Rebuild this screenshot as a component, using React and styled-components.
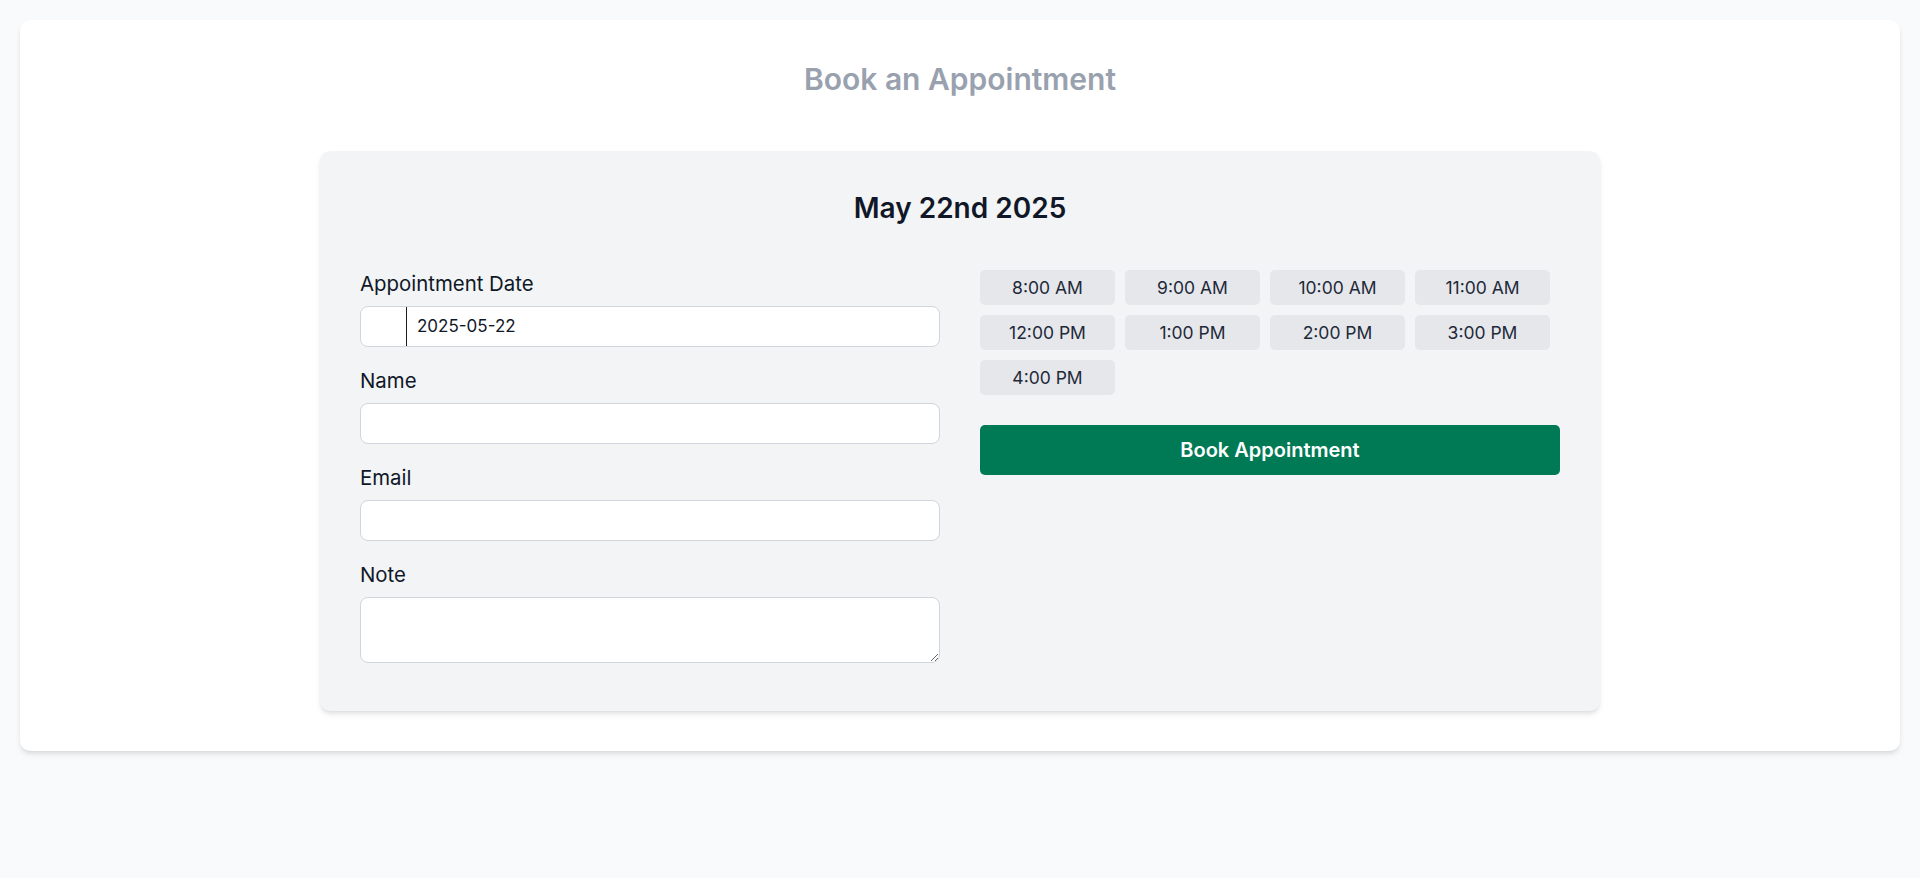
import React from "react";
import styled, { createGlobalStyle } from "styled-components";

const Global = createGlobalStyle`
  * { box-sizing: border-box; }
  html, body { margin: 0; padding: 0; }
  body {
    background: #f9fafb;
    font-family: Inter, "Noto Sans", sans-serif;
    color: #101828;
  }
`;

const Page = styled.div`
  padding: 20px;
  min-height: 878px;
`;

const Card = styled.section`
  background: #ffffff;
  border-radius: 10px;
  box-shadow: 0 4px 6px -1px rgba(0, 0, 0, 0.1), 0 2px 4px -2px rgba(0, 0, 0, 0.1);
  padding: 43px 40px 40px;
`;

const Title = styled.h1`
  margin: 0 0 56px;
  text-align: center;
  font-size: 30px;
  line-height: 32px;
  font-weight: 600;
  color: #99a1af;
`;

const Panel = styled.div`
  width: 1280px;
  margin: 0 auto;
  background: #f3f4f6;
  border-radius: 10px;
  box-shadow: 0 4px 6px -1px rgba(0, 0, 0, 0.1), 0 2px 4px -2px rgba(0, 0, 0, 0.1);
  padding: 43px 40px 48px;
`;

const DateHeading = styled.h2`
  margin: 0 0 48px;
  text-align: center;
  font-size: 28px;
  line-height: 28px;
  font-weight: 600;
  color: #101828;
`;

const Columns = styled.div`
  display: grid;
  grid-template-columns: 1fr 1fr;
  column-gap: 40px;
  align-items: start;
`;

const FormColumn = styled.div`
  display: flex;
  flex-direction: column;
  gap: 20.5px;
`;

const Field = styled.div`
  display: flex;
  flex-direction: column;
`;

const Label = styled.label`
  font-size: 20.4px;
  line-height: 28px;
  margin-bottom: 8px;
  color: #101828;
`;

const DateBox = styled.div`
  display: flex;
  align-items: stretch;
  height: 40.5px;
  background: #ffffff;
  border: 1px solid #d1d5dc;
  border-radius: 8px;
  overflow: hidden;
`;

const IconSlot = styled.span`
  width: 46px;
  flex: none;
  border-right: 1px solid #1e1e1e;
`;

const DateInput = styled.input`
  flex: 1;
  border: none;
  outline: none;
  background: transparent;
  padding: 0 10px;
  font-family: inherit;
  font-size: 17px;
  color: #101828;
`;

const TextInput = styled.input`
  height: 40.5px;
  background: #ffffff;
  border: 1px solid #d1d5dc;
  border-radius: 8px;
  padding: 0 10px;
  font-family: inherit;
  font-size: 17px;
  outline: none;
`;

const NoteArea = styled.textarea`
  display: block;
  height: 66px;
  background: #ffffff;
  border: 1px solid #d1d5dc;
  border-radius: 8px;
  padding: 8px 10px;
  font-family: inherit;
  font-size: 17px;
  outline: none;
`;

const SlotColumn = styled.div`
  display: flex;
  flex-direction: column;
  gap: 30px;
`;

const SlotGrid = styled.div`
  display: flex;
  flex-wrap: wrap;
  gap: 10px;
`;

const SlotButton = styled.button`
  width: 135px;
  height: 35px;
  border: none;
  border-radius: 5px;
  background: ${(p) => (p.$active ? "#d1d5dc" : "#e5e7eb")};
  color: #1e2939;
  font-family: inherit;
  font-size: 17.5px;
  cursor: pointer;
  padding: 0;
`;

const BookButton = styled.button`
  width: 100%;
  height: 49.5px;
  border: none;
  border-radius: 5px;
  background: #007a55;
  color: #ffffff;
  font-family: inherit;
  font-size: 20px;
  font-weight: 600;
  cursor: pointer;
`;

const slots = [
  "8:00 AM",
  "9:00 AM",
  "10:00 AM",
  "11:00 AM",
  "12:00 PM",
  "1:00 PM",
  "2:00 PM",
  "3:00 PM",
  "4:00 PM",
];

export default function App() {
  return (
    <>
      <Global />
      <Page>
        <Card>
          <Title>Book an Appointment</Title>
          <Panel>
            <DateHeading>May 22nd 2025</DateHeading>
            <Columns>
              <FormColumn>
                <Field>
                  <Label>Appointment Date</Label>
                  <DateBox>
                    <IconSlot />
                    <DateInput readOnly defaultValue="2025-05-22" />
                  </DateBox>
                </Field>
                <Field>
                  <Label>Name</Label>
                  <TextInput type="text" />
                </Field>
                <Field>
                  <Label>Email</Label>
                  <TextInput type="email" />
                </Field>
                <Field>
                  <Label>Note</Label>
                  <NoteArea />
                </Field>
              </FormColumn>
              <SlotColumn>
                <SlotGrid>
                  {slots.map((s) => (
                    <SlotButton key={s} type="button">
                      {s}
                    </SlotButton>
                  ))}
                </SlotGrid>
                <BookButton type="button">Book Appointment</BookButton>
              </SlotColumn>
            </Columns>
          </Panel>
        </Card>
      </Page>
    </>
  );
}
